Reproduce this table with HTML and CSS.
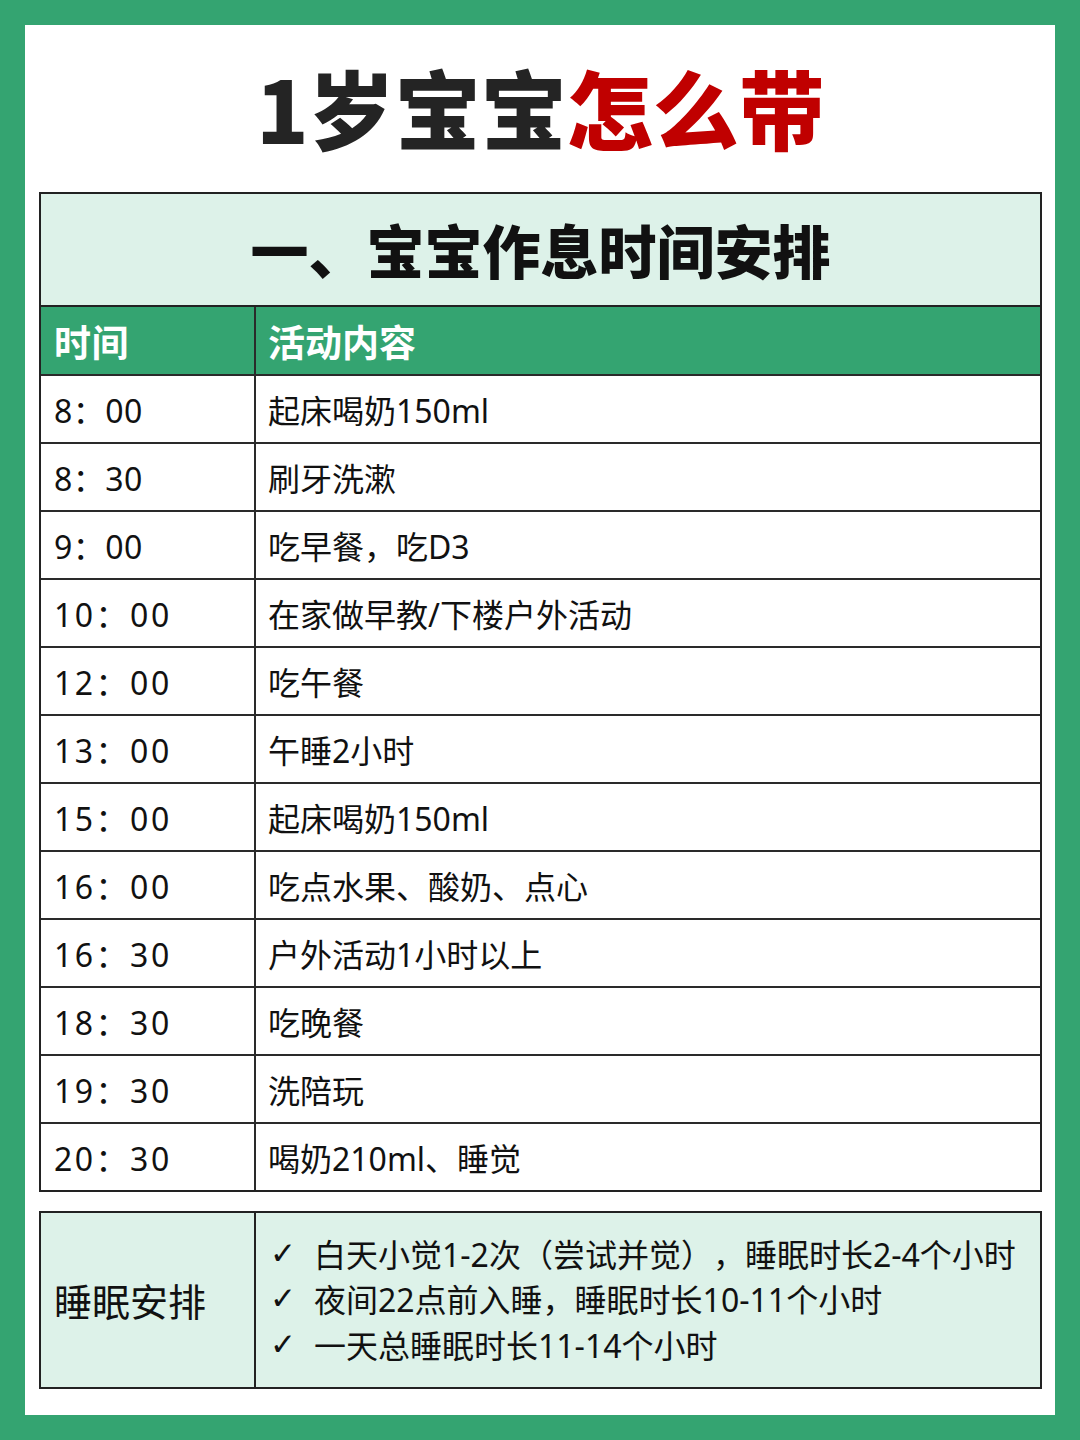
FILE: index.html
```html
<!DOCTYPE html>
<html lang="zh-CN">
<head>
<meta charset="utf-8">
<title>1岁宝宝怎么带</title>
<link rel="stylesheet" href="styles.css">
</head>
<body>
<div class="card">
  <h1 class="title">1岁宝宝<span class="red">怎么带</span></h1>
  <div class="schedule">
    <div class="sched-title">一、宝宝作息时间安排</div>
    <div class="row head"><div class="c1">时间</div><div class="c2">活动内容</div></div>
    <div class="row"><div class="c1">8：00</div><div class="c2">起床喝奶150ml</div></div>
    <div class="row"><div class="c1">8：30</div><div class="c2">刷牙洗漱</div></div>
    <div class="row"><div class="c1">9：00</div><div class="c2">吃早餐，吃D3</div></div>
    <div class="row"><div class="c1 wide">10：00</div><div class="c2">在家做早教/下楼户外活动</div></div>
    <div class="row"><div class="c1 wide">12：00</div><div class="c2">吃午餐</div></div>
    <div class="row"><div class="c1 wide">13：00</div><div class="c2">午睡2小时</div></div>
    <div class="row"><div class="c1 wide">15：00</div><div class="c2">起床喝奶150ml</div></div>
    <div class="row"><div class="c1 wide">16：00</div><div class="c2">吃点水果、酸奶、点心</div></div>
    <div class="row"><div class="c1 wide">16：30</div><div class="c2">户外活动1小时以上</div></div>
    <div class="row"><div class="c1 wide">18：30</div><div class="c2">吃晚餐</div></div>
    <div class="row"><div class="c1 wide">19：30</div><div class="c2">洗陪玩</div></div>
    <div class="row last"><div class="c1 wide">20：30</div><div class="c2">喝奶210ml、睡觉</div></div>
  </div>
  <div class="sleep">
    <div class="s1">睡眠安排</div>
    <div class="s2">
      <div class="item"><span class="check">✓</span><span class="txt">白天小觉1-2次（尝试并觉），睡眠时长2-4个小时</span></div>
      <div class="item"><span class="check">✓</span><span class="txt">夜间22点前入睡，睡眠时长10-11个小时</span></div>
      <div class="item"><span class="check">✓</span><span class="txt">一天总睡眠时长11-14个小时</span></div>
    </div>
  </div>
</div>
</body>
</html>
```
FILE: styles.css
```css
html, body {
  margin: 0;
  padding: 0;
}
body {
  width: 1080px;
  height: 1440px;
  box-sizing: border-box;
  padding: 25px;
  background: #34a471;
  font-family: "Noto Sans", "Noto Sans CJK SC", sans-serif;
  color: #111;
  text-spacing-trim: space-all;
}
.card {
  background: #fff;
  height: 1390px;
  box-sizing: border-box;
  padding: 0 13px 0 14px;
  display: flex;
  flex-direction: column;
}
.title {
  margin: 0;
  height: 167px;
  display: flex;
  align-items: center;
  justify-content: center;
  font-family: "Noto Sans CJK SC", sans-serif;
  font-size: 86px;
  font-weight: 800;
  color: #242424;
  padding-bottom: 4px;
  box-sizing: border-box;
}
.red {
  color: #c00000;
}
.schedule {
  border: 2px solid #222;
}
.sched-title {
  height: 113px;
  background: #ddf2e9;
  border-bottom: 2px solid #222;
  box-sizing: border-box;
  display: flex;
  align-items: center;
  justify-content: center;
  font-family: "Noto Sans CJK SC", sans-serif;
  font-size: 58px;
  font-weight: 900;
  color: #111;
  padding-bottom: 2px;
}
.row {
  display: grid;
  grid-template-columns: 213px 1fr;
  height: 68px;
  border-bottom: 2px solid #2a2a2a;
  box-sizing: border-box;
  font-size: 32px;
}
.row.last {
  border-bottom: none;
  height: 66px;
}
.row.head {
  background: #34a471;
  color: #fff;
  font-family: "Noto Sans CJK SC", sans-serif;
  font-weight: 700;
  font-size: 37px;
  height: 69px;
}
.c1, .c2 {
  display: flex;
  align-items: center;
  padding-left: 13px;
}
.c1 {
  letter-spacing: 0.5px;
}
.c1.wide {
  letter-spacing: 2.5px;
}
.c2 {
  border-left: 2px solid #2a2a2a;
  padding-left: 12px;
}
.sleep {
  margin-top: 19px;
  border: 2px solid #222;
  background: #ddf2e9;
  height: 178px;
  box-sizing: border-box;
  display: grid;
  grid-template-columns: 213px 1fr;
}
.s1 {
  display: flex;
  align-items: center;
  padding-left: 13px;
  font-size: 38px;
  padding-bottom: 2px;
}
.s2 {
  border-left: 2px solid #222;
  display: flex;
  flex-direction: column;
  justify-content: center;
  padding-left: 14px;
  padding-bottom: 4px;
}
.item {
  display: flex;
  align-items: center;
  height: 45.5px;
  font-size: 32px;
}
.check {
  width: 44px;
  font-size: 31px;
  font-family: "DejaVu Sans", sans-serif;
}
.txt {
  white-space: nowrap;
}
```
